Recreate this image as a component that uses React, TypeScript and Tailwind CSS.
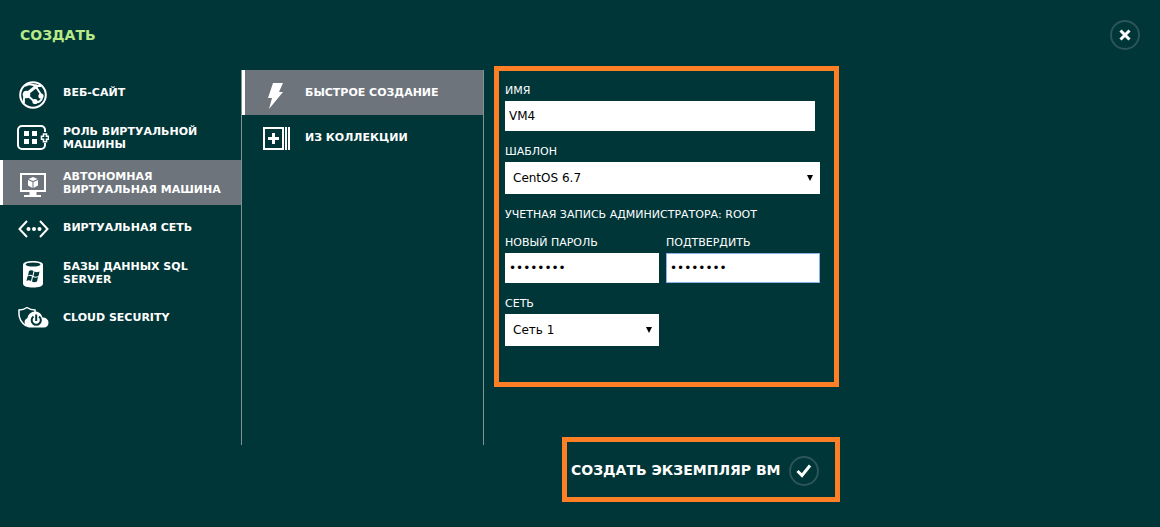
import React, { useState } from 'react';

type NavItemProps = {
  label: string;
  icon: React.ReactNode;
  active?: boolean;
  onSelect: () => void;
};

const GlobeIcon = () => (
  <svg width="32" height="32" viewBox="0 0 32 32" fill="none" stroke="white">
    <circle cx="16" cy="16" r="12.800" strokeWidth="2" />
    <path d="M9.500 15 19 7.500" strokeWidth="3" />
    <path d="M10 16 18 23M19 7C14 4.500 10 5 8 7M19 8 25 17M8 17C6.500 19 6.500 21 7 24M18 23C21 24 25 22 25 18M20 7 24 7" strokeWidth="2" />
    <g fill="white" stroke="none">
      <circle cx="9.500" cy="15.500" r="3.800" />
      <circle cx="19" cy="7.500" r="2.200" />
      <circle cx="18" cy="22.500" r="2.600" />
      <circle cx="24" cy="17" r="2.600" />
    </g>
  </svg>
);

const RoleIcon = () => (
  <svg width="32" height="32" viewBox="0 0 32 32" fill="none" stroke="white" strokeWidth="2">
    <path d="M28 8V6a4 4 0 0 0-4-4H5a4 4 0 0 0-4 4v15a4 4 0 0 0 4 4h19a4 4 0 0 0 4-4v-2" />
    <path d="M7 7h5v5H7zM15 7h5v5h-5zM7 15h5v5H7zM15 15h5v5h-5z" fill="white" stroke="none" />
    <path d="M26.500 10h3v2.300h2v3h-2v2.400h-3v-2.400h-2v-3h2z" strokeWidth="1.600" />
  </svg>
);

const MachineIcon = () => (
  <svg width="32" height="32" viewBox="0 0 32 32">
    <path d="M3 4h26v19H3zM5 6v15h22V6z" fill="white" fillRule="evenodd" />
    <path d="M12.500 23h7v3h-7zM7 26h17v2H7z" fill="white" />
    <path d="m16 8 4.500 2-4.500 2-4.500-2zM11 11l4.500 2v6L11 16.500zM21 11l-4.500 2v6l4.500-2.500z" fill="white" />
  </svg>
);

const NetworkIcon = () => (
  <svg width="32" height="32" viewBox="0 0 32 32" fill="none" stroke="white" strokeWidth="2">
    <path d="m10 7-7.500 8 7.500 8M23 7l7.500 8-7.500 8" />
    <g fill="white" stroke="none">
      <circle cx="11.500" cy="15" r="2" />
      <circle cx="17" cy="15" r="2" />
      <circle cx="22.500" cy="15" r="2" />
    </g>
  </svg>
);

const DatabaseIcon = () => (
  <svg width="32" height="32" viewBox="0 0 32 32">
    <path d="M6 6C6 3 10.500 2 16 2s10 1 10 4v18.500c0 3-4.500 4-10 4s-10-1-10-4z" fill="white" />
    <ellipse cx="16" cy="5.500" rx="7.500" ry="2" fill="#003638" />
    <path d="M12 12c1.500-1 3-1 4.500 0l-1 4.500c-1.500-1-3-1-4.500 0zM17.500 12.500c1.500 1 3 1 5 0l-1 4.500c-2 1-3.500 1-5 0zM10.500 17.500c1.500-1 3-1 4.500 0L14 22c-1.500-1-3-1-4.500 0zM16 18c1.500 1 3 1 5 0l-1 4.500c-2 1-3.500 1-5 0z" fill="#003638" />
  </svg>
);

const CloudIcon = () => (
  <svg width="32" height="32" viewBox="0 0 32 32">
    <path d="M10 3.500C8 5 5 6 2 6v4c0 5 3 9 7 12M10 3.500C12 5 15 6 18 6v2" fill="none" stroke="white" strokeWidth="1.500" />
    <path d="M12 23.500a5 5 0 0 1-1.500-9.500C11 10.500 14 7.500 18 7.500c4 0 6.500 2.500 7.500 6 3.500 0 6 2 6 5.200s-2 4.800-4.500 4.800z" fill="white" />
    <path d="M16.500 12.500a4.600 4.600 0 1 0 5.500 0M19.200 10.500V17" fill="none" stroke="#003638" strokeWidth="2" />
  </svg>
);

const BoltIcon = () => (
  <svg width="32" height="32" viewBox="0 0 32 32">
    <path d="M14 4h10l-4 9h4L10 30l3-11H9z" fill="white" />
  </svg>
);

const GalleryIcon = () => (
  <svg width="32" height="32" viewBox="0 0 32 32" fill="white">
    <path d="M4 3h21v23H4zM6 5v19h17V5z" fillRule="evenodd" />
    <path d="M13 9h3v4h4v3h-4v4h-3v-4H9v-3h4zM26 3h2v23h-2zM29 3h2v23h-2z" />
  </svg>
);

const NavItem: React.FC<NavItemProps> = ({ label, icon, active, onSelect }) => (
  <li>
    <button
      type="button"
      onClick={onSelect}
      className={`flex h-[45px] w-full items-center border-l-3 pr-5 pl-3.5 text-left text-[11px] leading-[13px] font-bold uppercase ${
        active ? 'border-white bg-[#6d747c]' : 'border-transparent'
      }`}
    >
      <span className="mt-1 mr-3.5 shrink-0">{icon}</span>
      <span>{label}</span>
    </button>
  </li>
);

type SelectFieldProps = {
  id: string;
  label: string;
  options: string[];
};

const SelectField: React.FC<SelectFieldProps> = ({ id, label, options }) => (
  <div>
    <label htmlFor={id} className="block uppercase">{label}</label>
    <div className="relative">
      <select id={id} className="h-8 w-full appearance-none bg-white px-2 text-[12px] text-black outline-none">
        {options.map((option) => (
          <option key={option}>{option}</option>
        ))}
      </select>
      <svg className="pointer-events-none absolute top-[13px] right-[7px]" width="6" height="6" viewBox="0 0 6 6">
        <path d="M0 0h6L3 6z" />
      </svg>
    </div>
  </div>
);

const services = [
  { label: 'Веб-сайт', icon: <GlobeIcon /> },
  { label: 'Роль виртуальной машины', icon: <RoleIcon /> },
  { label: 'Автономная виртуальная машина', icon: <MachineIcon /> },
  { label: 'Виртуальная сеть', icon: <NetworkIcon /> },
  { label: 'Базы данных SQL Server', icon: <DatabaseIcon /> },
  { label: 'Cloud Security', icon: <CloudIcon /> },
];

const methods = [
  { label: 'Быстрое создание', icon: <BoltIcon /> },
  { label: 'Из коллекции', icon: <GalleryIcon /> },
];

export default function App() {
  const [service, setService] = useState(2);
  const [method, setMethod] = useState(0);

  return (
    <div className="min-h-screen bg-[#003638] font-['DejaVu_Sans',sans-serif] text-white">
      <header className="flex h-[66px] items-center justify-between pt-1 pr-5 pl-5">
        <h1 className="text-[14px] font-bold text-[#b8e986] uppercase">Создать</h1>
        <button type="button" aria-label="Закрыть" className="flex size-[30px] items-center justify-center rounded-full border-2 border-[#2b5558]">
          <svg width="12" height="12" viewBox="0 0 12 12" stroke="white" strokeWidth="3">
            <path d="m1.500 1.500 9 9M10.500 1.500l-9 9" />
          </svg>
        </button>
      </header>

      <main className="flex items-start">
        <nav aria-label="Службы" className="mt-1 min-h-[375px] w-[242px] shrink-0 border-r border-[#7f9394]">
          <ul>
            {services.map((item, index) => (
              <NavItem key={item.label} {...item} active={index === service} onSelect={() => setService(index)} />
            ))}
          </ul>
        </nav>
        <nav aria-label="Способ создания" className="mt-1 min-h-[375px] w-[242px] shrink-0 border-r border-[#7f9394]">
          <ul>
            {methods.map((item, index) => (
              <NavItem key={item.label} {...item} active={index === method} onSelect={() => setMethod(index)} />
            ))}
          </ul>
        </nav>

        <form className="ml-2.5 w-full max-w-[346px]" onSubmit={(event) => event.preventDefault()}>
          <div className="mr-px space-y-[11px] border-5 border-[#ff7f27] px-1.5 pt-2.5 pb-9 text-[11px] leading-5">
            <div>
              <label htmlFor="name" className="block uppercase">Имя</label>
              <input id="name" defaultValue="VM4" className="block h-[30px] w-[310px] max-w-full bg-white px-1 text-[12px] text-black outline-none" />
            </div>
            <div className="mr-2">
              <SelectField id="template" label="Шаблон" options={['CentOS 6.7']} />
            </div>
            <p className="mb-2 uppercase">Учетная запись администратора: root</p>
            <div className="mr-2 grid grid-cols-2 gap-x-[7px] gap-y-[11px]">
              <div>
                <label htmlFor="password" className="block uppercase">Новый пароль</label>
                <input id="password" type="password" defaultValue="password" className="block h-[30px] w-full bg-white px-1 text-[12px] text-black outline-none" />
              </div>
              <div>
                <label htmlFor="confirm" className="block uppercase">Подтвердить</label>
                <input id="confirm" type="password" defaultValue="password" className="block h-[30px] w-full border border-[#8ab0ee] bg-white px-[3px] text-[12px] text-black outline-none" />
              </div>
              <SelectField id="network" label="Сеть" options={['Сеть 1']} />
            </div>
          </div>

          <div className="mt-[50px] ml-auto flex h-[65px] w-[278px] items-center border-5 border-[#ff7f27] pt-0.5 pl-1">
            <button type="submit" className="flex items-center gap-2 text-[14px] font-bold whitespace-nowrap uppercase">
              Создать экземпляр ВМ
              <span className="flex size-[30px] items-center justify-center rounded-full border-2 border-[#2b5558]">
                <svg width="16" height="14" viewBox="0 0 16 14" fill="none" stroke="white" strokeWidth="3">
                  <path d="m1.500 7 4.500 4.500L14 1.500" />
                </svg>
              </span>
            </button>
          </div>
        </form>
      </main>
    </div>
  );
}
